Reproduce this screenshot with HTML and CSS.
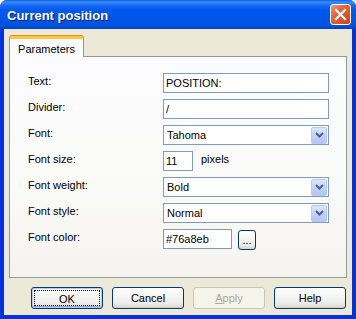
FILE: index.html
```html
<!DOCTYPE html>
<html lang="en">

<head>
    <meta charset="UTF-8">
    <title>Current position</title>
    <link rel="stylesheet" href="styles.css">
</head>

<body>
    <div class="window">
        <div class="titlebar">
            <span class="title">Current position</span>
            <button class="close" type="button">
                <svg width="13" height="13" viewBox="0 0 13 13">
                    <path d="M2 2 L11 11 M11 2 L2 11" stroke="#fff" stroke-width="2.2" stroke-linecap="square"/>
                </svg>
            </button>
        </div>

        <div class="frame">
            <div class="tabs">
                <div class="tab active">Parameters</div>
            </div>

            <div class="panel">
                <form class="params">
                    <label>Text:</label>
                    <input type="text" class="field" value="POSITION:">

                    <label>Divider:</label>
                    <input type="text" class="field" value="/">

                    <label>Font:</label>
                    <div class="select">
                        <span>Tahoma</span>
                        <span class="arrow"><svg width="9" height="6" viewBox="0 0 9 6"><path d="M1 1 L4.5 4.5 L8 1" fill="none" stroke="#4d6185" stroke-width="2"/></svg></span>
                    </div>

                    <label>Font size:</label>
                    <div class="inline">
                        <input type="text" class="field small" value="11">
                        <span class="unit">pixels</span>
                    </div>

                    <label>Font weight:</label>
                    <div class="select">
                        <span>Bold</span>
                        <span class="arrow"><svg width="9" height="6" viewBox="0 0 9 6"><path d="M1 1 L4.5 4.5 L8 1" fill="none" stroke="#4d6185" stroke-width="2"/></svg></span>
                    </div>

                    <label>Font style:</label>
                    <div class="select">
                        <span>Normal</span>
                        <span class="arrow"><svg width="9" height="6" viewBox="0 0 9 6"><path d="M1 1 L4.5 4.5 L8 1" fill="none" stroke="#4d6185" stroke-width="2"/></svg></span>
                    </div>

                    <label>Font color:</label>
                    <div class="inline">
                        <input type="text" class="field color" value="#76a8eb">
                        <button type="button" class="btn dots">...</button>
                    </div>
                </form>
            </div>

            <div class="buttons">
                <button type="button" class="btn default"><span class="focus">OK</span></button>
                <button type="button" class="btn">Cancel</button>
                <button type="button" class="btn" disabled><u>A</u>pply</button>
                <button type="button" class="btn">Help</button>
            </div>
        </div>
    </div>
</body>

</html>
```

FILE: styles.css
```css
* {
    box-sizing: border-box;
}

body {
    margin: 0;
    font-family: Tahoma, "Liberation Sans", Arial, sans-serif;
    font-size: 11px;
    color: #000;
    background: #fff;
}

.window {
    width: 356px;
    height: 319px;
    display: flex;
    flex-direction: column;
    background: #0831d9;
    border-radius: 7px 7px 0 0;
    overflow: hidden;
}

.titlebar {
    height: 29px;
    flex: none;
    display: flex;
    align-items: center;
    justify-content: space-between;
    padding: 0 5px 0 7px;
    background: linear-gradient(#0a5fe0 0, #3d8ffb 2px, #1a6cf6 5px, #0058ee 10px, #0055e8 20px, #0050dc 26px, #0044c8 29px);
}

.title {
    color: #fff;
    font-family: "Liberation Sans", Arial, sans-serif;
    font-weight: bold;
    font-size: 13px;
    text-shadow: 1px 1px 0 #0a1e8c;
    padding-top: 1px;
}

.close {
    width: 21px;
    height: 21px;
    padding: 0;
    border: 1px solid #fff;
    border-radius: 3px;
    background: linear-gradient(135deg, #e99a7e 0, #e2683f 35%, #d9532a 70%, #c44420 100%);
    display: flex;
    align-items: center;
    justify-content: center;
}

.frame {
    flex: 1;
    margin: 0 4px 4px;
    background: #ece9d8;
    padding: 7px 5px 6px;
    display: flex;
    flex-direction: column;
}

.tabs {
    display: flex;
    height: 21px;
    position: relative;
    z-index: 1;
}

.tab {
    width: 75px;
    height: 21px;
    padding-top: 4px;
    text-align: center;
    background: #fcfcfe;
    border: 1px solid #919b9c;
    border-bottom: none;
    border-top: 3px solid #ffc83c;
    box-shadow: inset 0 0 0 0 transparent, 0 -1px 0 #e68b2c;
    border-radius: 3px 3px 0 0;
}

.panel {
    height: 222px;
    margin-top: -1px;
    border: 1px solid #919b9c;
    background: linear-gradient(#fcfcfe, #fafaf8 60%, #f4f3ee);
    padding: 16px 17px 0 18px;
}

.params {
    display: grid;
    grid-template-columns: 135px 166px;
    grid-auto-rows: 20px;
    row-gap: 6px;
}

.params label {
    padding-top: 2px;
}

.field {
    height: 20px;
    width: 100%;
    border: 1px solid #7f9db9;
    background: #fff;
    padding: 0 2px;
    font: inherit;
    color: #000;
    outline: none;
}

.field.small {
    width: 30px;
}

.field.color {
    width: 69px;
}

.inline {
    display: flex;
    align-items: flex-start;
}

.unit {
    margin-left: 8px;
    padding-top: 2px;
}

.select {
    height: 20px;
    border: 1px solid #7f9db9;
    background: #fff;
    display: flex;
    align-items: center;
    justify-content: space-between;
    padding: 0 1px 0 3px;
}

.arrow {
    width: 16px;
    height: 17px;
    border-radius: 2px;
    border: 1px solid #b7c9f6;
    background: linear-gradient(#dce6fd, #c1d3fb 50%, #b2c6f5);
    display: flex;
    align-items: center;
    justify-content: center;
}

.btn {
    width: 72px;
    height: 22px;
    padding: 0;
    font: inherit;
    color: #000;
    border: 1px solid #003c74;
    border-radius: 3px;
    background: linear-gradient(#ffffff, #f5f5f1 40%, #ecebe6 80%, #d6d0c5);
}

.btn:disabled {
    color: #aca899;
    border-color: #c9c7ba;
    background: #f5f4ea;
}

.btn.default {
    box-shadow: inset 0 0 0 1px #b6c9ee, inset 0 -1px 0 1px #8faae2;
    padding: 2px;
}

.focus {
    display: block;
    height: 100%;
    line-height: 14px;
    padding-top: 1px;
    border: 1px dotted #000;
}

.btn.dots {
    width: 18px;
    height: 20px;
    margin-left: 6px;
    margin-top: 1px;
    line-height: 14px;
}

.buttons {
    display: flex;
    justify-content: flex-end;
    gap: 9px;
    margin-top: 9px;
    padding-right: 1px;
}
```
